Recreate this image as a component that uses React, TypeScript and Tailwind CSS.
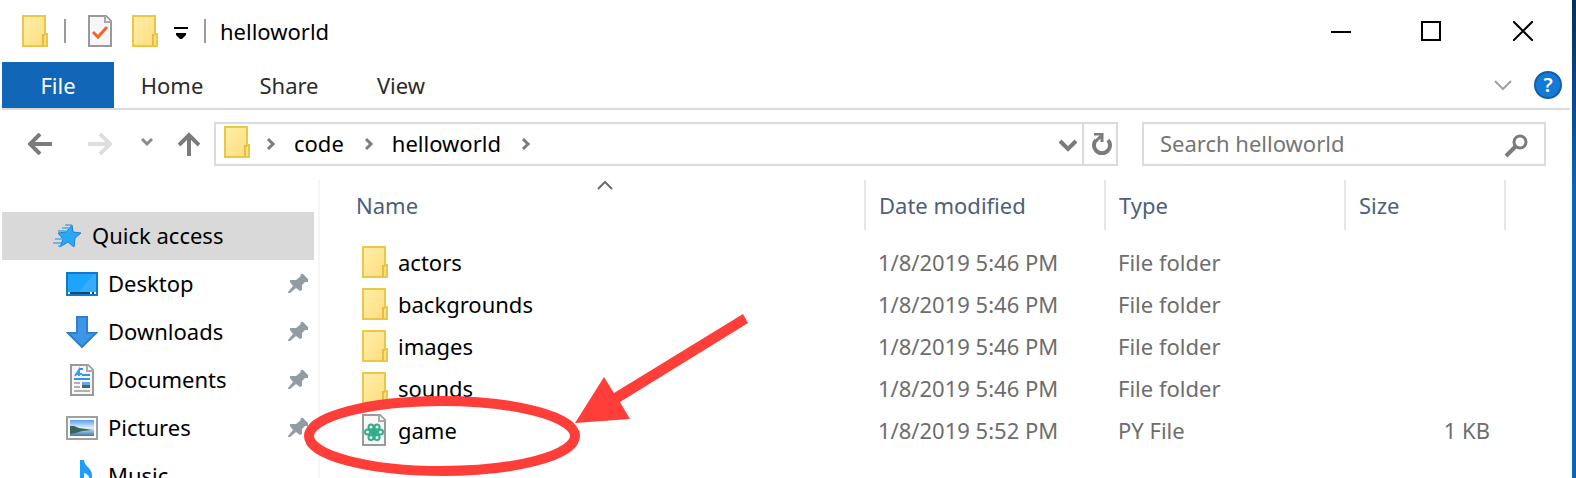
import type { ReactNode } from "react";

function FolderIcon() {
  return (
    <svg width="26" height="32" viewBox="0 0 26 32" className="shrink-0" aria-hidden="true">
      <defs>
        <linearGradient id="folder" x1="0" y1="0" x2="1" y2="1">
          <stop offset="0" stopColor="#ffeeaa" />
          <stop offset="1" stopColor="#fddd7c" />
        </linearGradient>
      </defs>
      <path d="M1 1H23V19H25V31H1Z" fill="url(#folder)" stroke="#ebc647" strokeWidth="2" />
      <path d="M21 31V20H23" fill="none" stroke="#e6be45" strokeWidth="2" />
    </svg>
  );
}

function Sheet({ children }: { children: ReactNode }) {
  return (
    <svg width="24" height="32" viewBox="0 0 24 32" className="shrink-0" aria-hidden="true">
      <path d="M1 1H18L23 6V31H1Z" fill="#f7f7f7" stroke="#9a9a9a" strokeWidth="2" />
      <path d="M17 1V7H23" fill="#fff" stroke="#a8a8a8" strokeWidth="2" />
      {children}
    </svg>
  );
}

function CheckSheetIcon() {
  return (
    <Sheet>
      <path d="M5 17L10 22L19 12" fill="none" stroke="#f4632f" strokeWidth="3" />
    </Sheet>
  );
}

function GameFileIcon() {
  return (
    <Sheet>
      <g fill="none" stroke="#2fae87" strokeWidth="2">
        <circle cx="9" cy="13" r="2.5" />
        <circle cx="15" cy="13" r="2.5" />
        <circle cx="5.5" cy="18" r="2.5" />
        <circle cx="18.5" cy="18" r="2.5" />
        <circle cx="9" cy="23.5" r="2.5" />
        <circle cx="15" cy="23.5" r="2.5" />
        <path d="M7 18H17M10 15L14 21M14 15L10 21M8 16H16M9 20H15" />
      </g>
    </Sheet>
  );
}

function DocumentsIcon() {
  return (
    <Sheet>
      <path d="M9 12V6L5 12M7 10H12" fill="none" stroke="#3b9fe0" strokeWidth="2" />
      <path d="M9 5H13M12 11H20M4 15H20" stroke="#2e96dd" strokeWidth="2" />
      <path d="M4 19H10M4 23H10M4 27H20" stroke="#b0b0b0" strokeWidth="2" />
      <rect x="12" y="18" width="8" height="3" fill="#6ba5e8" />
      <rect x="12" y="21" width="8" height="3" fill="#3f6b62" />
    </Sheet>
  );
}

function StarIcon() {
  return (
    <svg width="30" height="24" viewBox="0 0 30 24" className="shrink-0" aria-hidden="true">
      <path
        d="M19 1L20 8L28 9L22 14L21 23L15 18L7 23L10 15L5 9L13 8Z"
        fill="#29a8f8"
        stroke="#1b82cc"
        strokeWidth="1"
      />
      <path d="M12 1H19M9 4H17M5 7H13M2 15H10M0 19H8M5 22H9" stroke="#4eaae6" strokeWidth="1.5" />
    </svg>
  );
}

function DesktopIcon() {
  return (
    <svg width="32" height="24" viewBox="0 0 32 24" aria-hidden="true">
      <rect x="1" y="1" width="30" height="22" fill="#1da4fc" stroke="#1179c5" strokeWidth="2" />
      <path d="M13 20L28 2H30V20Z" fill="#36adfb" />
      <path d="M2 21H30" stroke="#0a4a78" strokeWidth="2" />
      <path d="M2 21H4M24 21H26M28 21H30" stroke="#fff" strokeWidth="2" />
    </svg>
  );
}

function DownloadsIcon() {
  return (
    <svg width="32" height="32" viewBox="0 0 32 32" aria-hidden="true">
      <path d="M11 1H21V17H30L16 31L2 17H11Z" fill="#3d97e6" stroke="#2d7fcb" strokeWidth="2" />
    </svg>
  );
}

function PicturesIcon() {
  return (
    <svg width="32" height="24" viewBox="0 0 32 24" aria-hidden="true">
      <defs>
        <linearGradient id="sky" x1="0" y1="0" x2="0" y2="1">
          <stop offset="0" stopColor="#5b9df0" />
          <stop offset="0.5" stopColor="#e2f2fc" />
          <stop offset="0.7" stopColor="#8fbcd8" />
          <stop offset="1" stopColor="#3f77b0" />
        </linearGradient>
      </defs>
      <rect x="1" y="1" width="30" height="22" fill="#fff" stroke="#a0a0a0" strokeWidth="2" />
      <rect x="4" y="4" width="24" height="16" fill="url(#sky)" />
      <path d="M4 10L8 10L13 12L20 13L26 14L16 15L10 17L4 18Z" fill="#3a6458" />
    </svg>
  );
}

function MusicIcon() {
  return (
    <svg width="32" height="32" viewBox="0 0 32 32" aria-hidden="true">
      <path
        d="M14 0H18C18 6 26 8 26 15C26 18 25 21 23 22C24 16 22 14 18 13V26C18 29 15 31 11 31C8 31 6 29 6 27C6 24 10 22 14 23Z"
        fill="#1d9ffa"
      />
    </svg>
  );
}

function PinIcon() {
  return (
    <svg width="20" height="20" viewBox="0 0 20 20" className="shrink-0" aria-hidden="true">
      <path
        d="M13 0H15L20 5V8L17 8L14 11V16L12 17L8 14L2 19H0V18L5 12L2 8V6H8L12 3Z"
        fill="#919ca3"
      />
    </svg>
  );
}

type LineProps = { d: string; w: number; h: number; color: string; stroke: number };

function Line({ d, w, h, color, stroke }: LineProps) {
  return (
    <svg width={w} height={h} viewBox={`0 0 ${w} ${h}`} fill="none" className="shrink-0" aria-hidden="true">
      <path d={d} stroke={color} strokeWidth={stroke} />
    </svg>
  );
}

function CrumbChevron() {
  return <Line d="M2 2L7 7L2 12" w={10} h={14} color="#7d7d7d" stroke={3} />;
}

const places = [
  { name: "Desktop", icon: <DesktopIcon />, pinned: true },
  { name: "Downloads", icon: <DownloadsIcon />, pinned: true },
  { name: "Documents", icon: <DocumentsIcon />, pinned: true },
  { name: "Pictures", icon: <PicturesIcon />, pinned: true },
  { name: "Music", icon: <MusicIcon />, pinned: false },
];

const files = [
  { name: "actors", date: "1/8/2019 5:46 PM", type: "File folder", size: "" },
  { name: "backgrounds", date: "1/8/2019 5:46 PM", type: "File folder", size: "" },
  { name: "images", date: "1/8/2019 5:46 PM", type: "File folder", size: "" },
  { name: "sounds", date: "1/8/2019 5:46 PM", type: "File folder", size: "" },
  { name: "game", date: "1/8/2019 5:52 PM", type: "PY File", size: "1 KB" },
];

function TitleBar() {
  return (
    <header className="flex h-[62px] items-center pl-5">
      <FolderIcon />
      <span className="ml-4 h-6 w-0.5 bg-[#9a9a9a]" />
      <button type="button" aria-label="Properties" className="ml-[22px]">
        <CheckSheetIcon />
      </button>
      <button type="button" aria-label="New folder" className="ml-5">
        <FolderIcon />
      </button>
      <button type="button" aria-label="Customize toolbar" className="ml-4 pt-1">
        <svg width="14" height="12" viewBox="0 0 14 12" aria-hidden="true">
          <path d="M0 0H14V2H0ZM2 6H12V8L8 12H6L2 8Z" fill="#000" />
        </svg>
      </button>
      <span className="ml-4 h-6 w-0.5 bg-[#9a9a9a]" />
      <h1 className="ml-[14px] text-black">helloworld</h1>
      <div className="ml-auto flex h-full items-center">
        <button type="button" aria-label="Minimize" className="flex w-[90px] justify-center">
          <Line d="M0 11H20" w={20} h={20} color="#000" stroke={2} />
        </button>
        <button type="button" aria-label="Maximize" className="flex w-[90px] justify-center">
          <Line d="M1 1H19V19H1Z" w={20} h={20} color="#000" stroke={2} />
        </button>
        <button type="button" aria-label="Close" className="flex w-[94px] justify-center">
          <Line d="M0 0L20 20M20 0L0 20" w={20} h={20} color="#000" stroke={2} />
        </button>
      </div>
    </header>
  );
}

function Ribbon() {
  return (
    <nav className="flex h-12 items-stretch border-b-2 border-[#dadada] text-[#2b2b2b]">
      <button type="button" className="w-28 bg-[#1166b8] text-white">File</button>
      <button type="button" className="w-[116px]">Home</button>
      <button type="button" className="w-[118px]">Share</button>
      <button type="button" className="w-[106px]">View</button>
      <div className="ml-auto flex items-center gap-[22px] pr-2">
        <button type="button" aria-label="Expand the ribbon">
          <Line d="M1 1L9 9L17 1" w={18} h={11} color="#a0a0a0" stroke={2} />
        </button>
        <button
          type="button"
          aria-label="Help"
          className="size-7 rounded-full border-2 border-[#1160a8] bg-[#1579d8] text-[20px] leading-6 font-semibold text-white"
        >
          ?
        </button>
      </div>
    </nav>
  );
}

function AddressBar() {
  return (
    <div className="mt-3 flex h-11 items-center pr-6 pl-[26px]">
      <button type="button" aria-label="Back">
        <Line d="M24 11H2M12 1L2 11L12 21" w={24} h={22} color="#7b7b7b" stroke={4} />
      </button>
      <button type="button" aria-label="Forward" className="ml-9">
        <Line d="M0 11H22M12 1L22 11L12 21" w={24} h={22} color="#dedede" stroke={4} />
      </button>
      <button type="button" aria-label="Recent locations" className="ml-7">
        <Line d="M2 1L7 6L12 1" w={14} h={12} color="#8a8a8a" stroke={3} />
      </button>
      <button type="button" aria-label="Up" className="ml-6">
        <Line d="M11 24V3M1 13L11 3L21 13" w={22} h={24} color="#7b7b7b" stroke={4} />
      </button>
      <div className="ml-[14px] flex h-full min-w-0 flex-1 items-center border-2 border-[#dadada] pl-2 text-black">
        <span className="pb-1"><FolderIcon /></span>
        <span className="ml-4"><CrumbChevron /></span>
        <a href="#code" className="ml-[18px] pb-0.5">code</a>
        <span className="ml-5"><CrumbChevron /></span>
        <a href="#helloworld" className="ml-[18px] pb-0.5">helloworld</a>
        <span className="ml-5"><CrumbChevron /></span>
        <button type="button" aria-label="Previous locations" className="mr-1 ml-auto pt-1">
          <Line d="M2 2L10 10L18 2" w={20} h={14} color="#7b7b7b" stroke={4} />
        </button>
        <button
          type="button"
          aria-label="Refresh"
          className="flex h-full w-[34px] items-center justify-center border-l-2 border-[#dadada] pl-1"
        >
          <svg width="20" height="22" viewBox="0 0 20 22" fill="none" aria-hidden="true">
            <path d="M4 7A8 8 0 1 0 16 7" stroke="#7b7b7b" strokeWidth="4" />
            <path d="M2 1H10V9" stroke="#7b7b7b" strokeWidth="3" />
            <path d="M4 8L9 3" stroke="#7b7b7b" strokeWidth="3" />
          </svg>
        </button>
      </div>
      <form role="search" className="ml-6 flex h-full w-[404px] items-center border-2 border-[#dadada] pr-4 pl-4">
        <input
          type="search"
          aria-label="Search helloworld"
          placeholder="Search helloworld"
          className="min-w-0 flex-1 bg-transparent pb-0.5 text-black outline-none placeholder:text-[#757575]"
        />
        <button type="button" aria-label="Search" className="pt-1">
          <svg width="24" height="24" viewBox="0 0 24 24" fill="none" aria-hidden="true">
            <circle cx="16" cy="8" r="6" stroke="#7b7b7b" strokeWidth="3" />
            <path d="M12 12L2 22" stroke="#7b7b7b" strokeWidth="4" />
          </svg>
        </button>
      </form>
    </div>
  );
}

function Sidebar() {
  return (
    <aside className="w-[318px] shrink-0 border-r-2 border-[#f5f5f5] pt-8 text-black">
      <a href="#quick-access" className="mr-1 flex h-12 items-center bg-[#d9d9d9] pl-[51px]">
        <StarIcon />
        <span className="ml-[9px] pb-0.5">Quick access</span>
      </a>
      <ul>
        {places.map((place) => (
          <li key={place.name}>
            <a href={`#${place.name}`} className="flex h-12 items-center pr-[10px] pl-16">
              <span className="flex w-8 justify-center">{place.icon}</span>
              <span className="ml-[10px] flex-1 pb-0.5">{place.name}</span>
              {place.pinned && <PinIcon />}
            </a>
          </li>
        ))}
      </ul>
    </aside>
  );
}

function FileTable() {
  return (
    <main className="relative min-w-0 flex-1">
      <table className="w-full table-fixed border-collapse text-left text-[#6d6d6d]">
        <colgroup>
          <col className="w-[545px]" />
          <col className="w-[240px]" />
          <col className="w-[240px]" />
          <col className="w-[160px]" />
          <col />
        </colgroup>
        <thead className="text-[#4c607a]">
          <tr className="h-[50px]">
            <th scope="col" className="relative border-r-2 border-[#e5e5e5] pl-9 font-normal">
              Name
              <span className="absolute top-0 left-[277px]">
                <Line d="M1 9L8 2L15 9" w={16} h={10} color="#6b6b6b" stroke={2} />
              </span>
            </th>
            <th scope="col" className="border-r-2 border-[#e5e5e5] pl-[13px] font-normal">Date modified</th>
            <th scope="col" className="border-r-2 border-[#e5e5e5] pl-[13px] font-normal">Type</th>
            <th scope="col" className="border-r-2 border-[#e5e5e5] pl-[13px] font-normal">Size</th>
            <td />
          </tr>
        </thead>
        <tbody>
          <tr aria-hidden="true" className="h-[11px]">
            <td colSpan={5} />
          </tr>
          {files.map((file) => (
            <tr key={file.name} className="h-[42px]">
              <td className="p-0 pl-[42px] text-black">
                <div className="flex items-center">
                  <span className="w-9">
                    {file.type === "File folder" ? <FolderIcon /> : <GameFileIcon />}
                  </span>
                  {file.name}
                </div>
              </td>
              <td className="p-0 pl-[13px]">{file.date}</td>
              <td className="p-0 pl-[13px]">{file.type}</td>
              <td className="p-0 pr-[15px] text-right">{file.size}</td>
              <td />
            </tr>
          ))}
        </tbody>
      </table>
      <svg
        width="448"
        height="162"
        viewBox="0 0 448 162"
        className="pointer-events-none absolute top-[134px] left-[-18px]"
        aria-hidden="true"
      >
        <ellipse cx="140" cy="122" rx="133" ry="35" fill="none" stroke="#ff3e39" strokeWidth="10" />
        <path d="M441 0L446 9L318 88L328 105L273 109L302 63L312 79Z" fill="#ff3e39" />
      </svg>
    </main>
  );
}

export default function App() {
  return (
    <div className="flex h-screen overflow-hidden bg-white font-['Noto_Sans','Open_Sans',sans-serif] text-[22px] leading-7">
      <div className="flex min-w-0 flex-1 flex-col pr-0.5 pl-0.5">
        <TitleBar />
        <Ribbon />
        <AddressBar />
        <div className="mt-[14px] flex min-h-0 flex-1">
          <Sidebar />
          <FileTable />
        </div>
      </div>
      <div className="w-1 shrink-0 bg-linear-to-b from-[#052f5c] from-0% via-[#0d63bb] via-40% to-[#0d63bb]" />
    </div>
  );
}
